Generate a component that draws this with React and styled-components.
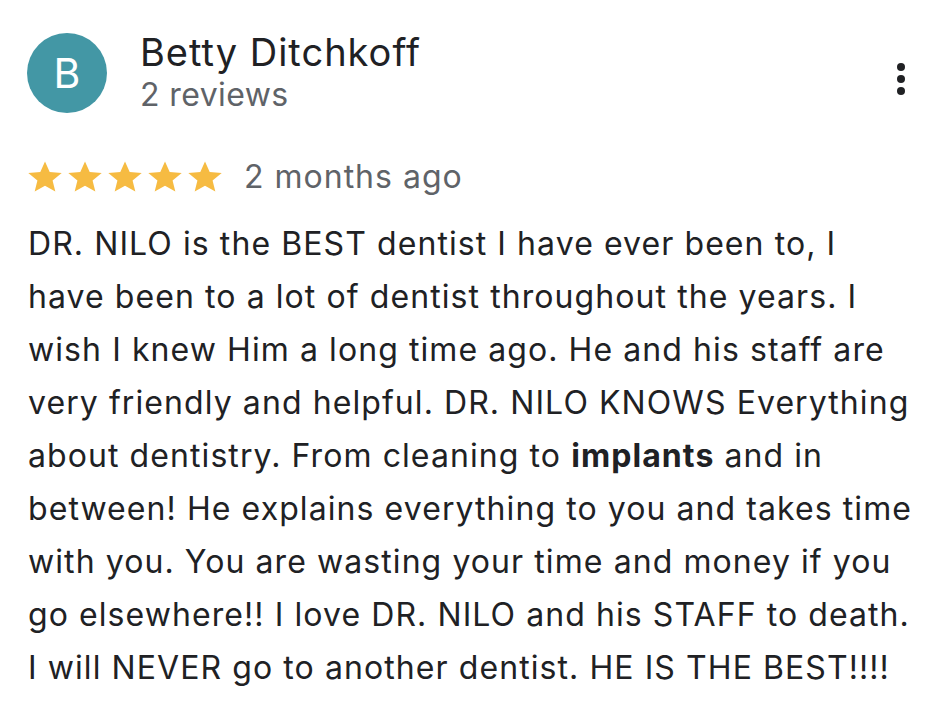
import React from 'react'
import styled, { createGlobalStyle } from 'styled-components'

const GlobalStyle = createGlobalStyle`
  body {
    margin: 0;
    background: #fff;
    font-family: Inter, Roboto, Arial, sans-serif;
  }
`

const Card = styled.div`
  width: 938px;
  height: 728px;
  box-sizing: border-box;
  padding: 33px 20px 0 28px;
  color: #202124;
`

const Header = styled.div`
  display: flex;
  align-items: flex-start;
`

const Avatar = styled.div`
  width: 80px;
  height: 80px;
  border-radius: 50%;
  background: #4397a5;
  color: #fff;
  font-size: 41px;
  display: flex;
  align-items: center;
  justify-content: center;
  flex-shrink: 0;
  margin-left: -1px;
`

const Author = styled.div`
  margin-left: 33px;
  flex: 1;
  display: flex;
  flex-direction: column;
  margin-top: -4px;
`

const Name = styled.div`
  font-size: 38px;
  line-height: 46px;
  letter-spacing: 1px;
`

const Count = styled.div`
  font-size: 32px;
  line-height: 40px;
  letter-spacing: 0.4px;
  color: #5f6368;
`

const MenuButton = styled.button`
  border: none;
  background: none;
  padding: 0;
  margin: 30px 13px 0 0;
  display: flex;
  flex-direction: column;
  gap: 4px;
  cursor: pointer;
`

const Dot = styled.span`
  width: 8px;
  height: 8px;
  border-radius: 50%;
  background: #202124;
`

const RatingRow = styled.div`
  display: flex;
  align-items: center;
  margin-top: 42px;
`

const Stars = styled.div`
  display: flex;
  gap: 6px;
  margin-right: 22px;
`

const Ago = styled.span`
  font-size: 32px;
  line-height: 40px;
  letter-spacing: 1px;
  color: #5f6368;
`

const Body = styled.p`
  margin: 20px 0 0;
  font-size: 32px;
  line-height: 53px;
  letter-spacing: 1.08px;
  color: #202124;
`

const Line = styled.span`
  display: block;
  white-space: nowrap;
`

const Star = () => (
  <svg width="34" height="32" viewBox="0 0 24 23">
    <path
      fill="#f6bb42"
      d="M12 17.77 19.42 22 17.45 14.02 24 8.65 15.37 7.92 12 0.4 8.63 7.92 0 8.65 6.55 14.02 4.58 22z"
    />
  </svg>
)

const lines = [
  'DR. NILO is the BEST dentist I have ever been to, I',
  'have been to a lot of dentist throughout the years. I',
  'wish I knew Him a long time ago. He and his staff are',
  'very friendly and helpful. DR. NILO KNOWS Everything',
  null,
  'between! He explains everything to you and takes time',
  'with you. You are wasting your time and money if you',
  'go elsewhere!! I love DR. NILO and his STAFF to death.',
  'I will NEVER go to another dentist. HE IS THE BEST!!!!',
]

export default function App() {
  return (
    <>
      <GlobalStyle />
      <Card>
        <Header>
          <Avatar>B</Avatar>
          <Author>
            <Name>Betty Ditchkoff</Name>
            <Count>2 reviews</Count>
          </Author>
          <MenuButton aria-label="More">
            <Dot />
            <Dot />
            <Dot />
          </MenuButton>
        </Header>
        <RatingRow>
          <Stars>
            {[0, 1, 2, 3, 4].map(i => (
              <Star key={i} />
            ))}
          </Stars>
          <Ago>2 months ago</Ago>
        </RatingRow>
        <Body>
          {lines.map((text, i) =>
            text === null ? (
              <Line key={i}>
                about dentistry. From cleaning to <b>implants</b> and in
              </Line>
            ) : (
              <Line key={i}>{text}</Line>
            )
          )}
        </Body>
      </Card>
    </>
  )
}
